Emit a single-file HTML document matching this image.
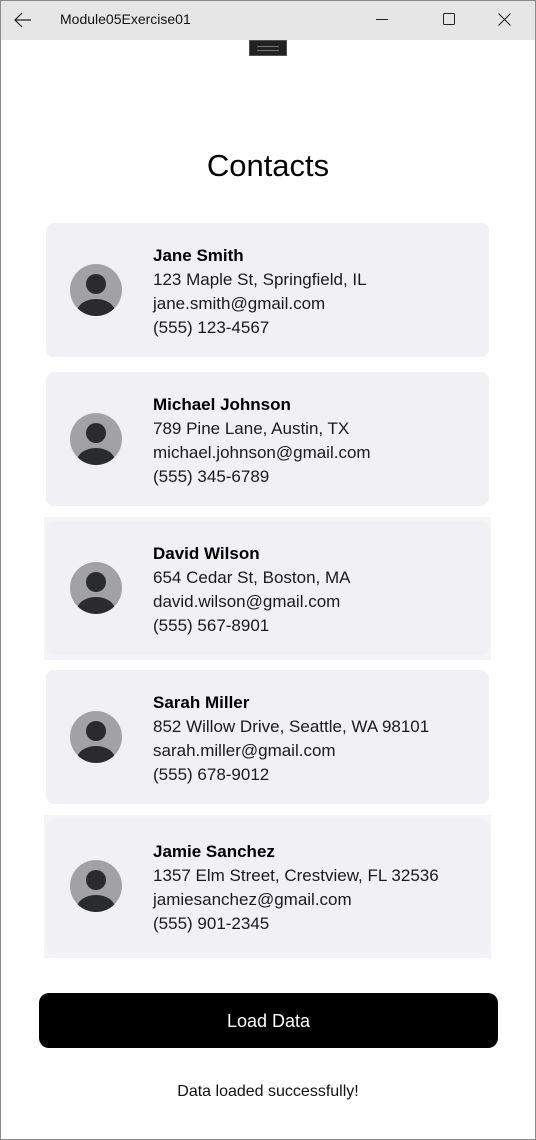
<!DOCTYPE html>
<html><head><meta charset="utf-8"><style>
*{margin:0;padding:0;box-sizing:border-box}
body{width:536px;height:1140px;background:#fff;position:relative;overflow:hidden;font-family:"Liberation Sans",sans-serif;color:#111}
.frame{position:absolute;inset:0;border:1px solid #8a8a8a;pointer-events:none}
.tb{position:absolute;left:0;top:0;width:536px;height:40px;background:#e6e6e6}
.tt{position:absolute;left:60px;top:11px;font-size:14px;color:#111}
.grip{position:absolute;left:249px;top:40px;width:38px;height:16px;background:#222;border:1px solid #555}
.grip:after{content:"";position:absolute;left:7px;top:5px;width:22px;height:3px;border-top:1px solid #777;border-bottom:1px solid #777}
h1{position:absolute;left:0;width:536px;top:148px;text-align:center;font-size:31px;font-weight:normal;color:#000}
.outer{position:absolute;left:44px;width:447px;height:143px;background:#f4f4f6}
.card{position:absolute;left:46px;width:443px;height:134px;background:#f1f0f5;border-radius:8px}
.card svg{position:absolute;left:24px;top:41px}
.txt{position:absolute;left:107px;top:21px;font-size:17px;line-height:24px;color:#1a1a1a}
.txt b{font-weight:bold;color:#000}
.btn{position:absolute;left:39px;top:993px;width:459px;height:55px;background:#000;border-radius:10px;color:#fff;font-size:18px;text-align:center;line-height:57px}
.st{position:absolute;left:0;width:536px;top:1083px;text-align:center;font-size:16px;color:#111}
</style></head><body>
<div class="tb">
<svg style="position:absolute;left:14px;top:12px" width="18" height="16" viewBox="0 0 18 16"><path d="M17 8H1M8 1L1 8l7 7" fill="none" stroke="#222" stroke-width="1.2"/></svg>
<div class="tt">Module05Exercise01</div>
<svg style="position:absolute;left:376px;top:19px" width="12" height="2"><rect width="12" height="1" fill="#222"/></svg>
<svg style="position:absolute;left:443px;top:13px" width="12" height="12"><rect x=".5" y=".5" width="11" height="11" rx="1" fill="none" stroke="#222"/></svg>
<svg style="position:absolute;left:498px;top:13px" width="13" height="13"><path d="M.5 .5l12 12M12.5 .5l-12 12" stroke="#222" stroke-width="1.1"/></svg>
</div>
<div class="grip"></div>
<h1>Contacts</h1>

<div class="outer" style="top:517px"></div>
<div class="outer" style="top:815px"></div>

<div class="card" style="top:223px"><svg width="52" height="52" viewBox="0 0 52 52"><defs><clipPath id="c"><circle cx="26" cy="26" r="26"/></clipPath></defs><circle cx="26" cy="26" r="26" fill="#a2a2a6"/><circle cx="26" cy="20" r="10" fill="#2a2b2f"/><ellipse cx="26" cy="48" rx="19" ry="13" fill="#2a2b2f" clip-path="url(#c)"/></svg><div class="txt"><b>Jane Smith</b><br>123 Maple St, Springfield, IL<br>jane.smith@gmail.com<br>(555) 123-4567</div></div>

<div class="card" style="top:372px"><svg width="52" height="52" viewBox="0 0 52 52"><circle cx="26" cy="26" r="26" fill="#a2a2a6"/><circle cx="26" cy="20" r="10" fill="#2a2b2f"/><ellipse cx="26" cy="48" rx="19" ry="13" fill="#2a2b2f" clip-path="url(#c)"/></svg><div class="txt"><b>Michael Johnson</b><br>789 Pine Lane, Austin, TX<br>michael.johnson@gmail.com<br>(555) 345-6789</div></div>

<div class="card" style="top:521px"><svg width="52" height="52" viewBox="0 0 52 52"><circle cx="26" cy="26" r="26" fill="#a2a2a6"/><circle cx="26" cy="20" r="10" fill="#2a2b2f"/><ellipse cx="26" cy="48" rx="19" ry="13" fill="#2a2b2f" clip-path="url(#c)"/></svg><div class="txt"><b>David Wilson</b><br>654 Cedar St, Boston, MA<br>david.wilson@gmail.com<br>(555) 567-8901</div></div>

<div class="card" style="top:670px"><svg width="52" height="52" viewBox="0 0 52 52"><circle cx="26" cy="26" r="26" fill="#a2a2a6"/><circle cx="26" cy="20" r="10" fill="#2a2b2f"/><ellipse cx="26" cy="48" rx="19" ry="13" fill="#2a2b2f" clip-path="url(#c)"/></svg><div class="txt"><b>Sarah Miller</b><br>852 Willow Drive, Seattle, WA 98101<br>sarah.miller@gmail.com<br>(555) 678-9012</div></div>

<div class="card" style="top:819px"><svg width="52" height="52" viewBox="0 0 52 52"><circle cx="26" cy="26" r="26" fill="#a2a2a6"/><circle cx="26" cy="20" r="10" fill="#2a2b2f"/><ellipse cx="26" cy="48" rx="19" ry="13" fill="#2a2b2f" clip-path="url(#c)"/></svg><div class="txt"><b>Jamie Sanchez</b><br>1357 Elm Street, Crestview, FL 32536<br>jamiesanchez@gmail.com<br>(555) 901-2345</div></div>

<div class="btn">Load Data</div>
<div class="st">Data loaded successfully!</div>
<div class="frame"></div>
</body></html>
